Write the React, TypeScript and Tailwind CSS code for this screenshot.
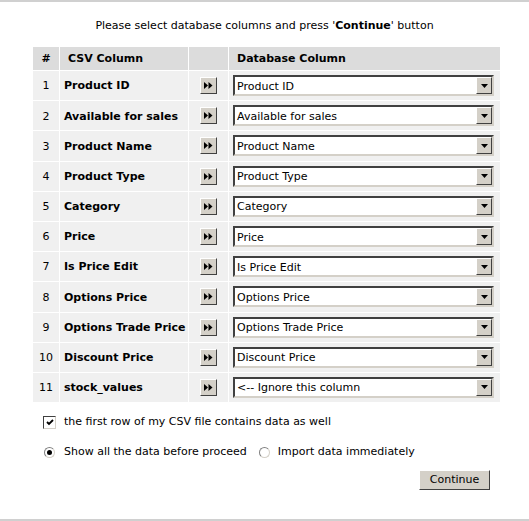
const rows: [string, string][] = [
  ["Product ID", "Product ID"],
  ["Available for sales", "Available for sales"],
  ["Product Name", "Product Name"],
  ["Product Type", "Product Type"],
  ["Category", "Category"],
  ["Price", "Price"],
  ["Is Price Edit", "Is Price Edit"],
  ["Options Price", "Options Price"],
  ["Options Trade Price", "Options Trade Price"],
  ["Discount Price", "Discount Price"],
  ["stock_values", "<-- Ignore this column"],
];

function ArrowButton() {
  return (
    <div className="w-[17px] h-[17px] bg-[#d4d0c8] border border-t-white border-l-white border-r-[#404040] border-b-[#404040] flex items-center justify-center">
      <svg width="9" height="7" viewBox="0 0 9 7">
        <path d="M0 0 L4 3.5 L0 7 Z M4.5 0 L8.5 3.5 L4.5 7 Z" fill="#000" />
      </svg>
    </div>
  );
}

function FakeSelect({ value }: { value: string }) {
  return (
    <div className="w-[261px] h-[21px] bg-white border-2 border-t-[#404040] border-l-[#404040] border-r-[#d4d0c8] border-b-[#d4d0c8] flex items-center">
      <span className="flex-1 pl-[2px] pt-[1px] text-[11px] text-black leading-none truncate">{value}</span>
      <div className="w-[16px] h-[17px] bg-[#d4d0c8] border border-t-white border-l-white border-r-[#404040] border-b-[#404040] flex items-center justify-center">
        <svg width="7" height="4" viewBox="0 0 7 4">
          <path d="M0 0 H7 L3.5 4 Z" fill="#000" />
        </svg>
      </div>
    </div>
  );
}

export default function App() {
  return (
    <div className="w-[529px] h-[521px] bg-white border-t-2 border-b-2 border-[#d0d0d0] font-['DejaVu_Sans',Verdana,sans-serif] text-[#000]">
      <div className="pt-[16px] h-[45px] text-center text-[11px]">
        Please select database columns and press '<b>Continue</b>' button
      </div>

      <div className="ml-[33px] w-[467px] grid grid-cols-[26px_128px_39px_271px] gap-[1px]">
        <div className="h-[23px] pt-[2px] bg-[#dcdcdc] flex items-center justify-center text-[11px] font-bold">#</div>
        <div className="h-[23px] pt-[2px] bg-[#dcdcdc] flex items-center pl-[8px] text-[11px] font-bold">CSV Column</div>
        <div className="h-[23px] bg-[#dcdcdc]"></div>
        <div className="h-[23px] pt-[2px] bg-[#dcdcdc] flex items-center pl-[8px] text-[11px] font-bold">Database Column</div>

        {rows.map(([csv, db], i) => (
          <div key={i} className="contents">
            <div className="h-[29.2px] pt-[2px] bg-[#f0f0f0] flex items-center justify-center text-[11px]">{i + 1}</div>
            <div className="h-[29.2px] pt-[2px] bg-[#f0f0f0] flex items-center pl-[4px] text-[11px] font-bold whitespace-nowrap">{csv}</div>
            <div className="h-[29.2px] bg-[#f0f0f0] flex items-center justify-center">
              <ArrowButton />
            </div>
            <div className="h-[29.2px] bg-[#f0f0f0] flex items-center pl-[4px]">
              <FakeSelect value={db} />
            </div>
          </div>
        ))}
      </div>

      <div className="ml-[43px] mt-[12px] flex items-center gap-[8px] text-[11px] h-[16px]">
        <div className="w-[13px] h-[13px] bg-white border border-t-[#404040] border-l-[#404040] border-r-[#d4d0c8] border-b-[#d4d0c8] flex items-center justify-center">
          <svg width="8" height="7" viewBox="0 0 8 7">
            <path d="M1 3 L3 5 L7 1" stroke="#000" strokeWidth="1.8" fill="none" />
          </svg>
        </div>
        <span>the first row of my CSV file contains data as well</span>
      </div>

      <div className="ml-[44px] mt-[14px] flex items-center text-[11px] h-[16px]">
        <div className="w-[11px] h-[11px] rounded-full bg-white border border-t-[#808080] border-l-[#808080] border-r-[#d4d0c8] border-b-[#d4d0c8] flex items-center justify-center">
          <div className="w-[5px] h-[5px] rounded-full bg-black"></div>
        </div>
        <span className="ml-[9px]">Show all the data before proceed</span>
        <div className="ml-[12px] w-[11px] h-[11px] rounded-full bg-white border border-t-[#808080] border-l-[#808080] border-r-[#d4d0c8] border-b-[#d4d0c8]"></div>
        <span className="ml-[8px]">Import data immediately</span>
      </div>

      <div className="mt-[10px] ml-[419px] w-[71px] h-[20px] bg-[#d4d0c8] border border-t-white border-l-white border-r-[#404040] border-b-[#404040] flex items-center justify-center text-[11px]">
        Continue
      </div>
    </div>
  );
}
